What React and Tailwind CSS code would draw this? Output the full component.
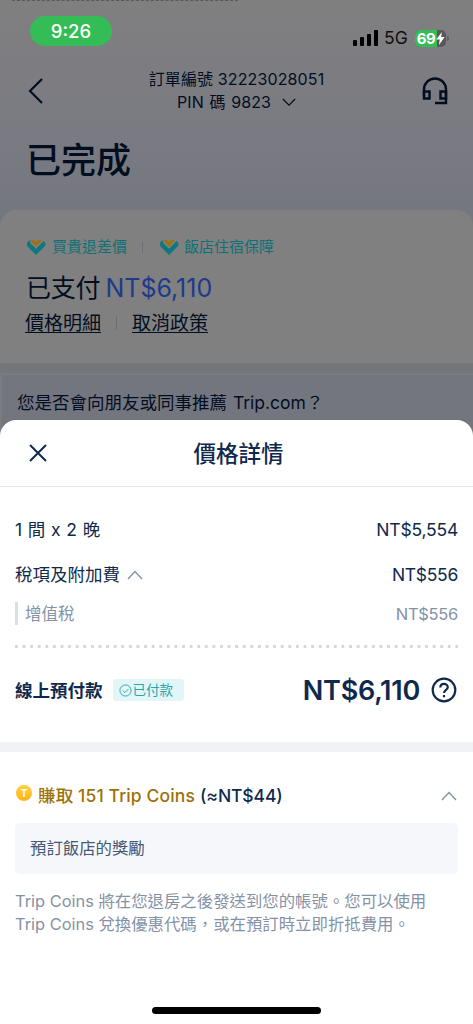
import { useState } from "react";

const COLORS = {
  slate: "#8592a6",
};

function Chevron({ up, className, stroke = COLORS.slate }) {
  return (
    <svg viewBox="0 0 16 10" className={className} fill="none" stroke={stroke} strokeWidth="1.4">
      <path d={up ? "M1 9L8 1.5L15 9" : "M1 1L8 8L15 1"} />
    </svg>
  );
}

function HeartCheck() {
  return (
    <svg viewBox="0 0 20 17" className="w-5 h-[17px] shrink-0">
      <path d="M4.500 1.200C1.200 1.800 -0.300 5.500 2 8L10 16L18.600 7.600C20.200 5.800 19.600 3.200 17.600 1.900L10 9.800L4.800 4.700C4 3.800 3.800 2.400 4.500 1.200Z" fill="#0f777d" />
      <path d="M5 1.300C6.800 0.700 8.300 1.200 10 2.800C11.600 1.200 13.800 0.600 16 1.300L10 7.600L5.500 3.200C5 2.700 4.800 2 5 1.300Z" fill="#9c7213" />
    </svg>
  );
}

function StatusBar() {
  return (
    <div className="flex justify-between pl-[30px] pr-[24px] pt-[15px] h-[45px]">
      <div className="w-[82px] h-[30px] rounded-full bg-[#34bd56] text-white text-[18.500px] leading-[31px] text-center font-medium">
        9:26
      </div>
      <div className="flex items-center h-[30px] mt-[7px]">
        <div className="flex items-end gap-[3px] h-[16px] -mt-[1px]">
          <div className="w-[4px] h-[6px] rounded-[1px] bg-black" />
          <div className="w-[4px] h-[9px] rounded-[1px] bg-black" />
          <div className="w-[4px] h-[12px] rounded-[1px] bg-black" />
          <div className="w-[4px] h-[16px] rounded-[1px] bg-black" />
        </div>
        <span className="ml-[6px] w-[24px] text-[17.500px] leading-[30px] text-[#101010] whitespace-nowrap">5G</span>
        <div className="ml-[7px] w-[31px] h-[17px] rounded-[5px] overflow-hidden flex bg-[#58585a] text-white">
          <div className="w-[22px] bg-[#34bd56] text-[15px] leading-[17px] font-bold text-center -tracking-[0.5px]">69</div>
          <svg viewBox="0 0 9 14" className="w-[9px] h-[13px] mt-[2px] -ml-[1px]">
            <path d="M6 0L0 8H3.7L2.8 14L9 5.5H5.2Z" fill="white" />
          </svg>
        </div>
        <div className="ml-[1px] w-[2px] h-[5px] rounded-r bg-[#5e5e60]" />
      </div>
    </div>
  );
}

function BookingPage() {
  return (
    <div className="h-[436px] overflow-hidden text-[#020e1f] bg-linear-to-b from-[#807f80] via-[#7a7b82] via-[130px] to-[#747680] to-[220px]">
      <div className="h-0 ml-3 w-[226px] border-t border-dashed border-[#59595a]" />
      <StatusBar />
      <div className="flex justify-between h-[92px] pt-[22px] pl-[28px] pr-[25px]">
        <svg viewBox="0 0 15 26" className="w-[15px] h-[26px] mt-[10px]" fill="none" stroke="#020e1f" strokeWidth="2.2">
          <path d="M14 1L2 13L14 25" />
        </svg>
        <div className="text-[16px] leading-[23px] text-center ml-[8px] tracking-[0.12px]">
          <div>訂單編號 32223028051</div>
          <div className="flex justify-center items-center">
            <span className="[word-spacing:1px]">PIN 碼 9823</span>
            <Chevron className="ml-[11px] w-[14px] h-[9px]" stroke="#020e1f" />
          </div>
        </div>
        <svg viewBox="0 0 26 28" className="w-[26px] h-[28px] mt-[9px]" fill="none" stroke="#020e1f" strokeWidth="2.4">
          <path d="M2 19V12.500A11 11 0 0 1 24 12.500V26H13" />
          <path d="M2 14.500H7.500V21.500H2ZM24 14.500H18.500V21.500H24Z" />
        </svg>
      </div>
      <h1 className="h-[72px] pl-[26px] text-[35px] leading-[44px] font-medium">已完成</h1>
      <div className="h-[153px] pl-[26px] rounded-t-[16px] bg-[#808080]">
        <div className="flex items-center pt-[25px] text-[15px] leading-[24px] text-[#107076]">
          <HeartCheck />
          <span className="ml-[6px]">買貴退差價</span>
          <div className="ml-[15px] mr-[16px] w-px h-[11px] bg-[#6c6d76]" />
          <HeartCheck />
          <span className="ml-[5px]">飯店住宿保障</span>
        </div>
        <div className="flex mt-[12px] text-[25px] leading-[34px]">
          <span className="tracking-[-0.2px]">已支付</span>
          <span className="ml-[5px] text-[#203a8b]">NT$6,110</span>
        </div>
        <div className="flex items-center mt-[7px] -ml-[1px] text-[19px] leading-[28px]">
          <span className="h-[23px] -mt-[2px] border-b border-[#020e1f]">價格明細</span>
          <div className="mx-[15px] w-px h-[14px] bg-[#6c6d76]" />
          <span className="h-[23px] -mt-[2px] border-b border-[#020e1f]">取消政策</span>
        </div>
      </div>
      <div className="h-[10px] bg-[#747678]" />
      <div className="h-[70px] border-t-2 border-l-2 border-[#7a7c80] bg-[#74767f] pl-[15px] pt-[15px] text-[17.500px] leading-[26px] [word-spacing:1px]">
        您是否會向朋友或同事推薦 Trip.com？
      </div>
    </div>
  );
}

function CoinIcon() {
  return (
    <div className="w-[16px] h-[16px] rounded-full bg-linear-to-b from-[#ffd13b] to-[#ffb31a] text-white text-[10px] leading-[16px] text-center font-bold">
      T
    </div>
  );
}

export default function App() {
  const [showTax, setShowTax] = useState(true);
  const [showCoins, setShowCoins] = useState(true);

  return (
    <div className="w-[473px] h-[1024px] overflow-hidden bg-white text-[#0f294d] font-['Inter','Noto_Sans_CJK_TC',sans-serif]">
      <BookingPage />
      <div className="relative -mt-[16px] h-[604px] rounded-t-[16px] bg-white">
        <div className="flex items-center h-[67px] border-b border-[#e3e5e9] pl-[29px] pr-[43px]">
          <svg viewBox="0 0 18 18" className="w-[18px] h-[18px]" fill="none" stroke="#0f294d" strokeWidth="2">
            <path d="M1 1L17 17M17 1L1 17" />
          </svg>
          <h2 className="flex-1 pt-[2px] text-center text-[22.500px] leading-[32px] font-medium">價格詳情</h2>
        </div>

        <div className="px-[15px] text-[17.500px]">
          <div className="flex justify-between pt-[30px] leading-[26px]">
            <span className="[word-spacing:0.800px]">1 間 x 2 晚</span>
            <span className="tracking-[-0.2px]">NT$5,554</span>
          </div>
          <div className="flex justify-between mt-[19px] leading-[26px]">
            <button className="flex items-center" onClick={() => setShowTax(!showTax)}>
              <span>稅項及附加費</span>
              <Chevron up={showTax} className="ml-[7px] w-[16px] h-[10px]" />
            </button>
            <span className="tracking-[-0.3px]">NT$556</span>
          </div>
          {showTax && (
            <div className="flex justify-between mt-[14px] h-[23px] border-l-3 border-[#dadfe6] pl-[7px] text-[16.500px] leading-[25px] text-[#8592a6]">
              <span>增值稅</span>
              <span className="tracking-[-0.3px]">NT$556</span>
            </div>
          )}
          <div className="mt-[20px] h-[3px] bg-[radial-gradient(circle_at_1.5px_1.5px,#d5d7e0_1.5px,transparent_1.6px)] bg-[length:7.6px_3px]" />
          <div className="flex items-center mt-[24px] h-[36px]">
            <span className="pt-[2px] leading-[26px] font-bold">線上預付款</span>
            <div className="flex items-center ml-[10px] h-[22px] w-[71px] pl-[6px] rounded-[3px] bg-[#e2f6f8] text-[13.500px] leading-[22px] text-[#25a6ae]">
              <svg viewBox="0 0 14 14" className="w-[13px] h-[13px] mr-[1px]" fill="none" stroke="#25a6ae">
                <circle cx="7" cy="7" r="6" />
                <path d="M4 7L6.400 9.300L10.300 5.300" />
              </svg>
              已付款
            </div>
            <span className="ml-auto pt-[2px] text-[27px] leading-[36px] font-semibold tracking-[-0.250px]">NT$6,110</span>
            <svg viewBox="0 0 26 26" className="w-[26px] h-[26px] ml-[11px] mr-[1px]" fill="none" stroke="#0f294d" strokeWidth="2.2">
              <circle cx="13" cy="13" r="11.300" />
              <path d="M9.300 10.600C9.300 5.600 16.800 5.900 16.800 10.200C16.800 12.900 13 12.700 13 16" />
              <path d="M13 18V20.300" />
            </svg>
          </div>
        </div>

        <div className="mt-[34px] h-[10px] bg-[#f0f2f6]" />

        <div className="px-[15px]">
          <button
            className="flex items-center w-full pt-[30px] text-[17.500px] leading-[27px] font-medium"
            onClick={() => setShowCoins(!showCoins)}
          >
            <span className="-mt-[5px] ml-[1px] mr-[6px]">
              <CoinIcon />
            </span>
            <span className="text-[#9e7108] tracking-[0.130px]">賺取 151 Trip Coins</span>
            <span className="ml-[5px] tracking-[-0.1px]">(≈NT$44)</span>
            <Chevron up={showCoins} className="ml-auto mr-[1px] w-[16px] h-[10px]" />
          </button>
          {showCoins && (
            <>
              <div className="mt-[14px] h-[51px] rounded-[5px] bg-[#f5f7fb] pl-[15px] text-[16.400px] leading-[50px] text-[#455873]">
                預訂飯店的獎勵
              </div>
              <p className="mt-[16px] text-[16.400px] leading-[23px] text-[#8592a6] whitespace-nowrap">
                Trip Coins 將在您退房之後發送到您的帳號。您可以使用
                <br />
                Trip Coins 兌換優惠代碼，或在預訂時立即折抵費用。
              </p>
            </>
          )}
        </div>

        <div className="absolute left-[152px] bottom-[10px] w-[169px] h-[7px] rounded-full bg-black" />
      </div>
    </div>
  );
}
